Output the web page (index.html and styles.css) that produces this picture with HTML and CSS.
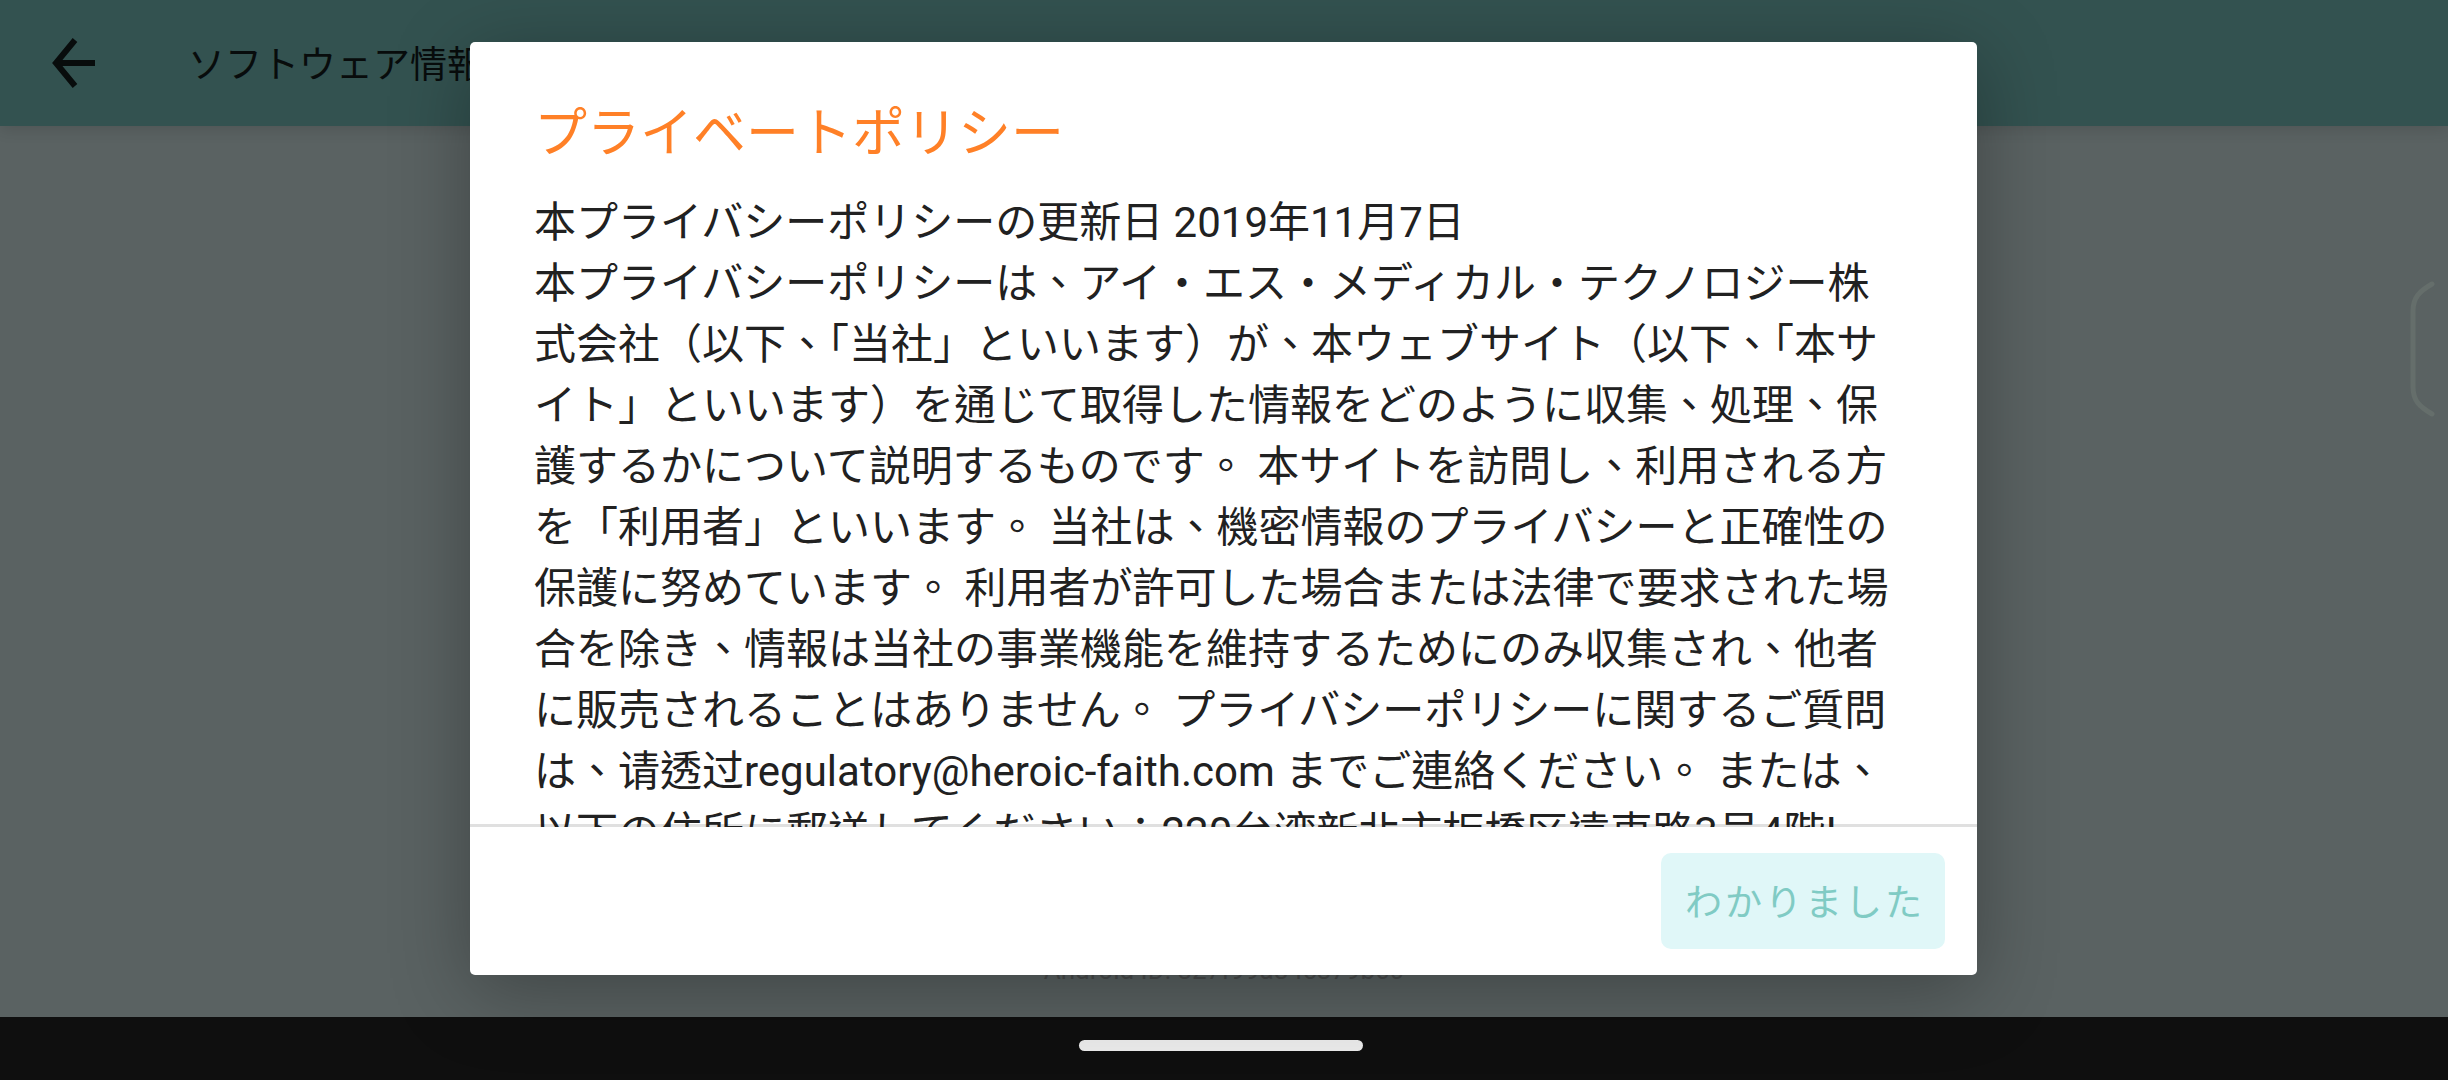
FILE: index.html
```html
<!DOCTYPE html>
<html lang="ja">
<head>
<meta charset="utf-8">
<meta name="viewport" content="width=device-width, initial-scale=1">
<title>ソフトウェア情報</title>
<link rel="stylesheet" href="styles.css">
</head>
<body>
<div class="screen">
  <header class="app-bar">
    <button class="back" type="button" aria-label="戻る">
      <svg viewBox="0 0 44 50" width="44" height="50" aria-hidden="true"><path d="M43 25H5M23 2 4 25 23 48" fill="none" stroke="currentColor" stroke-width="6"/></svg>
    </button>
    <h1 class="app-title">ソフトウェア情報</h1>
  </header>
  <main class="page">
    <p class="device-id">Android ID: 327f99a84c879b60</p>
  </main>
  <svg class="edge-handle" viewBox="0 0 26 140" width="26" height="140" aria-hidden="true"><path d="M23 5C11 12 4 18 4 32V108C4 122 11 128 23 135" fill="none" stroke="currentColor" stroke-width="5" stroke-linecap="round"/></svg>
  <div class="overlay">
    <section class="dialog" role="dialog" aria-modal="true" aria-labelledby="policy-title">
      <div class="dialog-body">
        <h2 class="dialog-title" id="policy-title">プライベートポリシー</h2>
        <p class="policy" lang="zh-Hant">本プライバシーポリシーの更新日 2019年11月7日<br>本プライバシーポリシーは、アイ・エス・メディカル・テクノロジー株式会社（以下、「当社」といいます）が、本ウェブサイト（以下、「本サイト」といいます）を通じて取得した情報をどのように収集、処理、保護するかについて説明するものです。 本サイトを訪問し、利用される方を「利用者」といいます。 当社は、機密情報のプライバシーと正確性の保護に努めています。 利用者が許可した場合または法律で要求された場合を除き、情報は当社の事業機能を維持するためにのみ収集され、他者に販売されることはありません。 プライバシーポリシーに関するご質問は、请透过regulatory@heroic-faith.com までご連絡ください。 または、以下の住所に郵送してください：220台湾新北市板橋区遠東路3号4階I</p>
      </div>
      <footer class="dialog-actions">
        <button class="confirm" type="button">わかりました</button>
      </footer>
    </section>
  </div>
  <nav class="nav-bar" aria-label="システム"><span class="home-pill"></span></nav>
</div>
</body>
</html>
```
FILE: styles.css
```css
* {
  box-sizing: border-box;
}

body {
  margin: 0;
  font-family: Roboto, "Noto Sans CJK TC", sans-serif;
  color: #212121;
}

.screen {
  position: relative;
  display: flex;
  flex-direction: column;
  height: 100vh;
  overflow: hidden;
  background: #5a6262;
}

.app-bar {
  position: relative;
  display: flex;
  align-items: center;
  gap: 92px;
  height: 126px;
  padding: 0 52px;
  background: #335250;
  color: #080c0c;
  box-shadow: 0 4px 14px rgba(0, 0, 0, 0.12);
}

.back {
  display: flex;
  padding: 0;
  border: 0;
  background: none;
  color: inherit;
}

.app-title {
  margin: 0;
  padding-top: 6px;
  font-size: 37px;
  font-weight: 400;
  line-height: 54px;
}

.page {
  flex: 1;
  display: flex;
  align-items: flex-end;
  justify-content: center;
  padding-bottom: 32px;
}

.device-id {
  margin: 0;
  color: #484b4b;
  font-size: 26px;
  line-height: 30px;
}

.edge-handle {
  position: absolute;
  top: 279px;
  right: 13px;
  color: #656e6b;
}

.overlay {
  position: absolute;
  inset: 0 0 63px;
  display: flex;
  justify-content: center;
  padding: 42px 17px 42px 16px;
}

.dialog {
  display: flex;
  flex-direction: column;
  width: 1507px;
  max-width: 100%;
  border-radius: 5px;
  background: #fff;
  box-shadow: 0 16px 80px rgba(0, 0, 0, 0.3);
}

.dialog-body {
  flex: 1;
  min-height: 0;
  overflow: hidden;
  padding: 53px 76px 0 64px;
}

.dialog-title {
  margin: 0 0 19px;
  color: #ff8027;
  font-size: 53px;
  font-weight: 400;
  line-height: 78px;
}

.policy {
  margin: 0;
  font-size: 42px;
  line-height: 61px;
}

.dialog-actions {
  display: flex;
  justify-content: flex-end;
  padding: 26px 32px;
  box-shadow: 0 -3px 0 rgba(0, 0, 0, 0.12);
}

.confirm {
  height: 96px;
  padding: 6px 20px 0 24px;
  border: 0;
  border-radius: 10px;
  background: #e0f7f8;
  color: #80cbc4;
  font: inherit;
  font-size: 37px;
  letter-spacing: 3px;
  line-height: 54px;
}

.nav-bar {
  display: flex;
  align-items: center;
  justify-content: center;
  height: 63px;
  padding: 0 6px 6px 0;
  background: #0f0f0f;
}

.home-pill {
  width: 284px;
  height: 11px;
  border-radius: 6px;
  background: #ebebeb;
}
```
